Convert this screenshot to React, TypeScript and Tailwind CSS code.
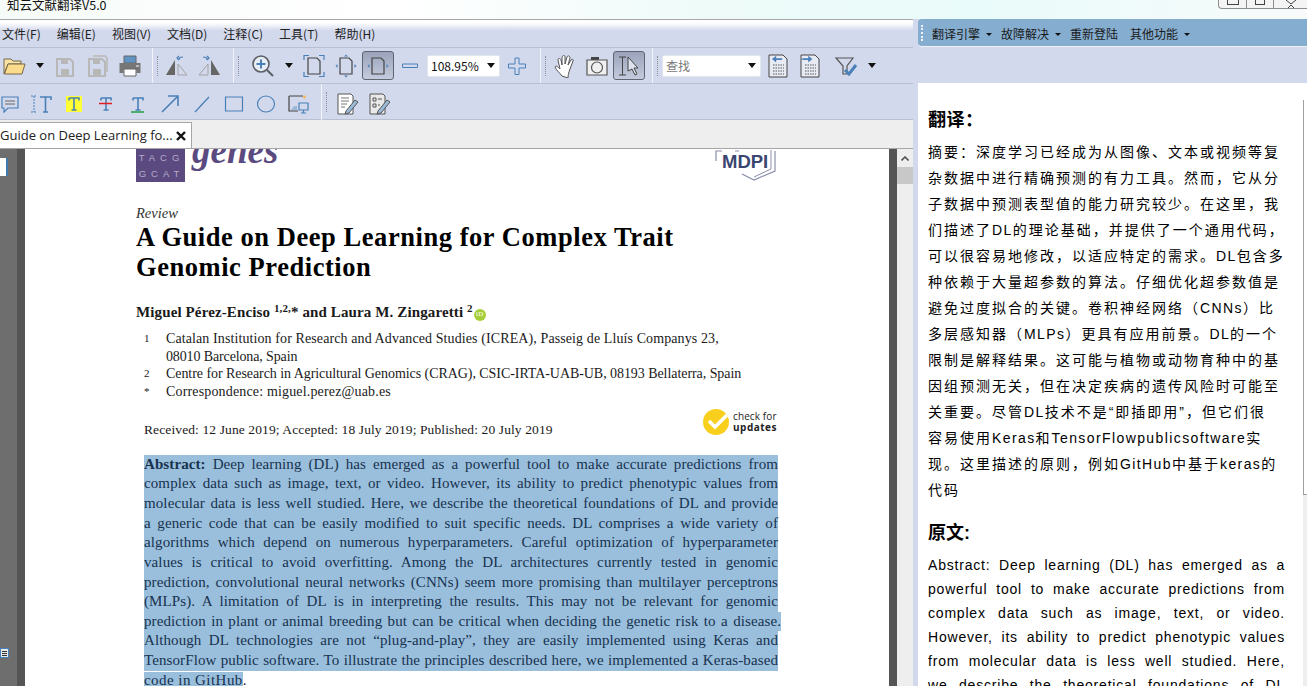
import type { ReactNode } from "react";

const MENUS = ["文件(F)", "编辑(E)", "视图(V)", "文档(D)", "注释(C)", "工具(T)", "帮助(H)"];

const ZH_LINES = [
  "摘要：深度学习已经成为从图像、文本或视频等复",
  "杂数据中进行精确预测的有力工具。然而，它从分",
  "子数据中预测表型值的能力研究较少。在这里，我",
  "们描述了DL的理论基础，并提供了一个通用代码，",
  "可以很容易地修改，以适应特定的需求。DL包含多",
  "种依赖于大量超参数的算法。仔细优化超参数值是",
  "避免过度拟合的关键。卷积神经网络（CNNs）比",
  "多层感知器（MLPs）更具有应用前景。DL的一个",
  "限制是解释结果。这可能与植物或动物育种中的基",
  "因组预测无关，但在决定疾病的遗传风险时可能至",
  "关重要。尽管DL技术不是“即插即用”，但它们很",
  "容易使用Keras和TensorFlowpublicsoftware实",
  "现。这里描述的原则，例如GitHub中基于keras的",
  "代码",
];

const EN_LINES = [
  "Abstract: Deep learning (DL) has emerged as a",
  "powerful tool to make accurate predictions from",
  "complex data such as image, text, or video.",
  "However, its ability to predict phenotypic values",
  "from molecular data is less well studied. Here,",
  "we describe the theoretical foundations of DL",
];

const ABSTRACT = [
  "Deep learning (DL) has emerged as a powerful tool to make accurate predictions from",
  "complex data such as image, text, or video. However, its ability to predict phenotypic values from",
  "molecular data is less well studied. Here, we describe the theoretical foundations of DL and provide",
  "a generic code that can be easily modified to suit specific needs. DL comprises a wide variety of",
  "algorithms which depend on numerous hyperparameters. Careful optimization of hyperparameter",
  "values is critical to avoid overfitting. Among the DL architectures currently tested in genomic",
  "prediction, convolutional neural networks (CNNs) seem more promising than multilayer perceptrons",
  "(MLPs). A limitation of DL is in interpreting the results. This may not be relevant for genomic",
  "prediction in plant or animal breeding but can be critical when deciding the genetic risk to a disease.",
  "Although DL technologies are not “plug-and-play”, they are easily implemented using Keras and",
  "TensorFlow public software. To illustrate the principles described here, we implemented a Keras-based",
];

const AFFILIATIONS = [
  { n: "1", t: "Catalan Institution for Research and Advanced Studies (ICREA), Passeig de Lluís Companys 23,", c: "tracking-[.1px]" },
  { n: "", t: "08010 Barcelona, Spain", c: "-tracking-[.13px]" },
  { n: "2", t: "Centre for Research in Agricultural Genomics (CRAG), CSIC-IRTA-UAB-UB, 08193 Bellaterra, Spain", c: "-tracking-[.06px]" },
  { n: "*", t: "Correspondence: miguel.perez@uab.es", c: "tracking-[.16px]" },
];

const BLUE = "#4a80b8";

const Svg = ({ children, w = 24 }: { children: ReactNode; w?: number }) => (
  <svg width={w} height="24" viewBox={`0 0 ${w} 24`} fill="none">
    {children}
  </svg>
);

const Caret = () => (
  <svg width="8" height="5" viewBox="0 0 8 5">
    <path d="M0 0h8L4 5z" fill="#111" />
  </svg>
);

const Cell = ({ w = 32, active, children }: { w?: number; active?: boolean; children?: ReactNode }) => (
  <div
    style={{ width: w }}
    className={`flex h-[29px] flex-none items-center justify-center rounded-[3px] ${
      active ? "border border-[#5f6672] bg-gradient-to-b from-[#9aa3ba] to-[#c5cbde]" : ""
    }`}
  >
    {children}
  </div>
);

const Divider = () => (
  <div className="mx-[2px] flex h-full flex-none items-center gap-[4px]">
    <div className="h-full w-[1px] bg-[#f2f4fa]" />
    <div className="h-[20px] w-[1px] border-l border-dotted border-[#8a8f9c]" />
  </div>
);

const Combo = ({ w, children }: { w: number; children: ReactNode }) => (
  <div
    style={{ width: w }}
    className="flex h-[22px] flex-none items-center justify-between rounded-[2px] border border-[#e4e6ee] bg-white pl-[3px] pr-[4px]"
  >
    {children}
    <Caret />
  </div>
);

const Folder = () => (
  <Svg>
    <path d="M1 5h7l2 2h8v3H5L1 20z" fill="#f8e3a5" stroke="#75674a" />
    <path d="M1.500 20 5 10h17l-3 10z" fill="#fbdb8c" stroke="#75674a" />
  </Svg>
);
const Floppy = ({ double }: { double?: boolean }) => (
  <Svg>
    {double && <path d="M7 2h12l2 2v13h-2" stroke="#c0c0c0" strokeWidth="2" />}
    <path d="M3 5h13l3 3v14H3z" stroke="#b8b8b8" strokeWidth="2" />
    <path d="M7 6h7v4H7zM7 15h8v6H7z" fill="#b8b8b8" />
  </Svg>
);
const Printer = () => (
  <Svg>
    <path d="M6 2h12v7H6z" fill="#5f93c4" stroke="#666" />
    <path d="M1.500 9h21v10h-4v-3h-13v3h-4z" fill="#767676" />
    <path d="M6 15h12v7H6z" fill="#fff" stroke="#666" />
    <path d="M18 12h3" stroke="#fff" />
  </Svg>
);
const Flip = ({ mirror }: { mirror?: boolean }) => (
  <Svg>
    <g transform={mirror ? "matrix(-1 0 0 1 24 0)" : undefined}>
      <path d="M1 21 10 6v15z" fill="#666" />
      <path d="M13 21V10l9 11z" stroke="#a3a3a3" />
      <path d="M14 6c0-2 1-3 4-3M14 2l-2 2 2 2" stroke={BLUE} strokeWidth="1.200" />
    </g>
  </Svg>
);
const Zoom = () => (
  <Svg>
    <circle cx="10" cy="10" r="8" fill="#e8ecf5" stroke="#5a5f66" strokeWidth="1.600" />
    <path d="M10 5.500v9M5.500 10h9" stroke={BLUE} strokeWidth="2" />
    <path d="m16 16 6 6" stroke="#5a5f66" strokeWidth="2" />
  </Svg>
);
const PageShape = () => <path d="M6 4h9l3 3v13H6z" stroke="#444" strokeWidth="1.200" />;
const FitPage = () => (
  <Svg>
    <PageShape />
    <path d="M2 6V1.500h5M17 1.500h5V6M2 18v4.500h5M17 22.500h5V18" stroke={BLUE} strokeWidth="1.200" />
  </Svg>
);
const FitHeight = () => (
  <Svg>
    <PageShape />
    <path d="M10 2.500 12 .5l2 2zM10 21.500l2 2 2-2zM3.500 10 1.500 12l2 2zM20.500 10l2 2-2 2z" fill={BLUE} />
  </Svg>
);
const FitWidth = () => (
  <Svg>
    <PageShape />
    <path d="M3.500 10 1.500 12l2 2zM20.500 10l2 2-2 2z" fill={BLUE} />
  </Svg>
);
const Minus = () => (
  <Svg>
    <path d="M4.500 10h15v3.500h-15z" stroke={BLUE} />
  </Svg>
);
const Plus = () => (
  <Svg>
    <path d="M10 4h4v6h6.500v4H14v6.500h-4V14H3.500v-4H10z" stroke={BLUE} />
  </Svg>
);
const Hand = () => (
  <Svg>
    <path
      d="M9 22c-2-3-6-6-7-9 1-2 3 0 5 2L5 6c0-2 2-2 3 0l1 5 0-8c1-2 3-2 3 0v7l2-7c1-2 3-1 3 1l-2 7 3-5c1-1 3-1 2 1l-3 8c-1 3-2 5-2 9z"
      fill="#fff"
      stroke="#555"
    />
  </Svg>
);
const Camera = () => (
  <Svg>
    <path d="M6 3h8v3H6z" fill="#444" />
    <path d="M2 6h20v15H2z" fill="#f0f0f0" stroke="#555" strokeWidth="1.200" />
    <circle cx="12" cy="13.500" r="5.500" stroke="#555" strokeWidth="1.200" />
  </Svg>
);
const SelectTool = () => (
  <Svg>
    <path d="M2 3h7M2 21h7M5.500 3v18" stroke="#444" />
    <path d="M11 3v14l4-2 3 6 2-1-3-6h4z" fill="#dde2ef" stroke="#444" />
  </Svg>
);
const NavDoc = ({ flip }: { flip?: boolean }) => (
  <Svg>
    <path d="M3 2h14l4 4v18H3z" fill="#e8ebf4" stroke="#444" transform="translate(0 -1)" />
    <path d="M7 11h11M7 14h11M7 17h11M7 20h11" stroke="#555" strokeDasharray="1.500 1" />
    <path d={flip ? "M5 5h7V2l5 4-5 4V7H5z" : "M19 5h-7V2L7 6l5 4V7h7z"} fill={BLUE} transform="scale(.85)" />
  </Svg>
);
const Funnel = () => (
  <Svg>
    <path d="M2 4h17l-6 8v8H9v-8z" stroke="#555" strokeWidth="1.200" />
    <path d="m11 16 4 4 7-9" stroke={BLUE} strokeWidth="3" />
  </Svg>
);

const Comment = () => (
  <Svg>
    <path d="M4 5h16v11H10l-4 4v-4H4z" stroke={BLUE} strokeWidth="1.200" />
    <path d="M7 9h10M7 12h10" stroke="#666" />
  </Svg>
);
const Ibeam = () => (
  <Svg>
    <path d="M1 4h6M1 20h6M4 4v16" stroke={BLUE} strokeDasharray="2 1" />
    <path d="M10 5h11v3M15.500 5v15M13 20h5" stroke={BLUE} strokeWidth="1.600" />
  </Svg>
);
const Letter = ({ bg, line }: { bg?: string; line?: { y: number; c: string } }) => (
  <Svg w={16}>
    {bg && <path d="M0 4h16v16H0z" fill={bg} />}
    <path d="M3 6h10v2.500M3 8.500V6M8 6v12M5.500 18h5" stroke={BLUE} strokeWidth="1.600" />
    {line && <path d={`M1 ${line.y}h13`} stroke={line.c} strokeWidth="1.500" />}
  </Svg>
);
const Arrow = () => (
  <Svg>
    <path d="M4 20 19 5M10 4h10v10" stroke={BLUE} strokeWidth="1.600" />
  </Svg>
);
const Line = () => (
  <Svg>
    <path d="m5 20 14-15" stroke={BLUE} strokeWidth="1.300" />
  </Svg>
);
const Rect = () => (
  <Svg>
    <path d="M3.500 5h17v14h-17z" stroke={BLUE} strokeWidth="1.200" />
  </Svg>
);
const Ellipse = () => (
  <Svg>
    <ellipse cx="12" cy="12" rx="8.500" ry="8" stroke={BLUE} strokeWidth="1.200" />
  </Svg>
);
const Stamp = () => (
  <Svg>
    <path d="M3 4h14M3 4v15h9" stroke="#444" strokeWidth="1.200" />
    <path d="M13 11h9v7h-9zM15 21h5M17.500 18v3" stroke={BLUE} strokeWidth="1.200" />
    <path d="M5 18l3-4h3v4z" fill="#9bb8d6" />
    <path d="M17 5h3M18.500 3.500v3" stroke="#f0b860" strokeWidth="1.500" />
  </Svg>
);
const Sign = ({ form }: { form?: boolean }) => (
  <Svg>
    <path d="M3 2h13l2 2v18H3z" fill={form ? "#e9e9e9" : "#fff"} stroke="#555" />
    {form ? (
      <path d="M6 6h3v3H6zM6 12h3v3H6zM11 7h4M11 13h2" stroke="#555" />
    ) : (
      <path d="M6 6h8M6 9h8M6 12h6M6 15h4" stroke="#777" />
    )}
    <path d="m11 19 9-11 3 2-9 11-4 1z" fill="#9bbad8" stroke="#555" />
  </Svg>
);

const Toolbars = () => (
  <div className="flex-none bg-[#d3d9ec]">
    <div className="flex h-[37px] items-center border-y border-[#b9c0d2]">
      <Cell w={29}><Folder /></Cell>
      <Cell w={21}><Caret /></Cell>
      <Cell><Floppy /></Cell>
      <Cell><Floppy double /></Cell>
      <Cell><Printer /></Cell>
      <Cell w={4} />
      <Divider />
      <Cell w={1} />
      <Cell><Flip /></Cell>
      <Cell><Flip mirror /></Cell>
      <Cell w={6} />
      <Divider />
      <Cell w={6} />
      <Cell><Zoom /></Cell>
      <Cell w={19}><Caret /></Cell>
      <Cell><FitPage /></Cell>
      <Cell><FitHeight /></Cell>
      <Cell active><FitWidth /></Cell>
      <Cell><Minus /></Cell>
      <Cell w={1} />
      <Combo w={73}><span className="text-[12px] text-[#111]">108.95%</span></Combo>
      <Cell w={1} />
      <Cell><Plus /></Cell>
      <Cell w={5} />
      <Divider />
      <Cell w={1} />
      <Cell><Hand /></Cell>
      <Cell><Camera /></Cell>
      <Cell active><SelectTool /></Cell>
      <Cell w={5} />
      <Divider />
      <Cell w={2} />
      <Combo w={99}><span className="text-[12px] text-[#777]">查找</span></Combo>
      <Cell w={1} />
      <Cell><NavDoc /></Cell>
      <Cell><NavDoc flip /></Cell>
      <Cell w={40}><Funnel /></Cell>
      <Cell w={12}><Caret /></Cell>
    </div>
    <div className="flex h-[36px] items-center border-b border-[#b9c0d2] pt-[4px]">
      <div className="-ml-[6px] flex items-center">
        <Cell><Comment /></Cell>
        <Cell><Ibeam /></Cell>
        <Cell><Letter bg="#ffff33" /></Cell>
        <Cell><Letter line={{ y: 11.500, c: "#e02020" }} /></Cell>
        <Cell><Letter line={{ y: 20, c: "#20a040" }} /></Cell>
        <Cell><Arrow /></Cell>
        <Cell><Line /></Cell>
        <Cell><Rect /></Cell>
        <Cell><Ellipse /></Cell>
        <Cell><Stamp /></Cell>
      </div>
      <div className="-mt-[4px] ml-[5px] flex h-[36px] items-center"><Divider /></div>
      <Cell w={34}><div className="pl-[2px]"><Sign /></div></Cell>
      <Cell><Sign form /></Cell>
    </div>
  </div>
);

const Line1 = ({ children, className = "" }: { children: ReactNode; className?: string }) => (
  <div className={`h-[19.640px] bg-[#9abfdc] leading-[19.640px] text-[#17324f] [text-align-last:justify] ${className}`}>{children}</div>
);

const Page = () => (
  <div className="relative min-w-0 flex-1 overflow-hidden bg-white font-['Liberation_Serif',serif] text-[#1a1a1a]">
    <div className="flex h-[33px] items-end justify-between pl-[111px] pr-[112px]">
      <div className="flex items-end">
        <div className="grid h-[33px] w-[49px] bg-[#5b4a80] pl-[2px] pt-[2px] text-center font-['Liberation_Sans',sans-serif] text-[9.500px] leading-[14px] tracking-[5px] text-[#b6aacb]">
          <span>TACG</span>
          <span>GCAT</span>
        </div>
        <span className="ml-[7px] -translate-y-[13px] text-[37px] leading-[37px] font-bold italic text-[#5b4a80]">genes</span>
      </div>
      <svg width="62" height="33" viewBox="0 0 62 33" fill="none">
        <path d="M1 12V2h6M20 2h4M60 2v20L39 31l-12-6" stroke="#8a8fa8" strokeWidth="1.200" />
        <path d="M56 1v19L39 28" stroke="#8a8fa8" />
        <text x="7" y="19" fontFamily="Liberation Sans" fontSize="18.500" fontWeight="700" fill="#3a4570">MDPI</text>
      </svg>
    </div>
    <div className="pl-[111px] pt-[23px] text-[14.500px] italic leading-[16px] text-[#333]">Review</div>
    <div className="pl-[111px] pt-[2px] text-[26.500px] font-bold leading-[29.500px] tracking-[.55px] text-black">
      <div>A Guide on Deep Learning for Complex Trait</div>
      <div>Genomic Prediction</div>
    </div>
    <div className="pl-[111px] pt-[21px] text-[15px] font-bold leading-[19px] tracking-[.12px]">
      Miguel Pérez-Enciso <sup className="text-[11px]">1,2,</sup>* and Laura M. Zingaretti <sup className="text-[11px]">2</sup>
      <span className="ml-[1px] inline-flex h-[12px] w-[12px] items-center justify-center rounded-full bg-[#a6ce39] align-[1px] text-[7px] font-normal text-white">iD</span>
    </div>
    <div className="pl-[119px] pt-[8px] text-[14px] leading-[17.700px]">
      {AFFILIATIONS.map((a) => (
        <div key={a.t} className="flex">
          <span className="w-[22px] flex-none text-[11px]">{a.n}</span>
          <span className={a.c}>{a.t}</span>
        </div>
      ))}
    </div>
    <div className="flex h-[36px] items-center justify-between pl-[119px] pr-[112px] pt-[10px] text-[13.500px] tracking-[.11px]">
      <span className="pt-[13px]">Received: 12 June 2019; Accepted: 18 July 2019; Published: 20 July 2019</span>
      <div className="mb-[4px] flex items-center gap-[4px] font-['Open_Sans',sans-serif] text-[10px] leading-[11px] text-[#222]">
        <svg width="26" height="26" viewBox="0 0 26 26" fill="none">
          <circle cx="13" cy="13" r="13" fill="#f8cf1d" />
          <path d="m6 12 6 6L24 6" stroke="#fff" strokeWidth="3.500" />
        </svg>
        <div>
          <div>check for</div>
          <div className="font-bold tracking-[.5px]">updates</div>
        </div>
      </div>
    </div>
    <div className="ml-[119px] mr-[111px] mt-[18px] text-[15px] tracking-[.1px]">
      <Line1><b>Abstract:</b> {ABSTRACT[0]}</Line1>
      {ABSTRACT.slice(1).map((l, i) => (
        <Line1 key={l} className={i === 7 ? "-mr-[3px]" : ""}>{l}</Line1>
      ))}
      <div className="h-[19.640px] leading-[19.640px]">
        <span className="bg-[#9abfdc] tracking-[.45px] text-[#17324f]">code in GitHub</span>.
      </div>
    </div>
  </div>
);

const DocArea = () => (
  <div className="flex min-h-0 flex-1">
    <div className="relative w-[17px] flex-none overflow-hidden bg-[#6e6e6e]">
      <div className="absolute left-0 top-[9px] h-[18px] w-[8px] rounded-r-[1px] border-r-2 border-[#3d7ab0] bg-white" />
      <div className="absolute left-0 top-[499px] flex h-[10px] w-[9px] flex-col justify-center gap-[1px] border border-[#4a80b8] bg-[#e8e8e8] px-[1px]">
        <i className="h-[1px] bg-[#333]" />
        <i className="h-[1px] bg-[#333]" />
        <i className="h-[1px] bg-[#333]" />
      </div>
    </div>
    <div className="w-[8px] flex-none bg-[#555]" />
    <Page />
    <div className="w-[8px] flex-none bg-[#555]" />
    <div className="flex w-[16px] flex-none flex-col items-center bg-[#eeeeee]">
      <svg className="mt-[7px]" width="8" height="5" viewBox="0 0 8 5" fill="none">
        <path d="m.5 4.500 3.500-3.500 3.500 3.500" stroke="#555" strokeWidth="1.600" />
      </svg>
      <div className="mt-[6px] h-[17px] w-full bg-[#c8c8c8]" />
    </div>
  </div>
);

const LeftPane = () => (
  <div className="flex w-[913px] flex-none flex-col">
    <div className="flex h-[28px] flex-none items-center gap-[16px] border-t border-[#a6a6a6] bg-gradient-to-b from-[#ffffff] from-10% to-[#d3d9ec] to-40% pl-[2px] pt-[1px] text-[12px] text-[#222]">
      {MENUS.map((m) => (
        <span key={m}>{m}</span>
      ))}
    </div>
    <Toolbars />
    <div className="flex h-[29px] flex-none items-end border-b border-[#a6a6a6] bg-[#eeeeee]">
      <div className="flex h-[27px] w-[192px] -mb-[1px] items-center justify-between border border-l-0 border-[#a6a6a6] bg-white pr-[5px] font-['Open_Sans',sans-serif] text-[13px] text-[#222]">
        <span className="whitespace-nowrap">Guide on Deep Learning fo...</span>
        <svg width="10" height="10" viewBox="0 0 10 10">
          <path d="m1 1 8 8M9 1 1 9" stroke="#111" strokeWidth="2.400" />
        </svg>
      </div>
    </div>
    <DocArea />
  </div>
);

const TopMenu = ({ label, caret = true, className = "" }: { label: string; caret?: boolean; className?: string }) => (
  <div className={`flex items-center gap-[6px] ${className}`}>
    <span>{label}</span>
    {caret && (
      <svg width="6" height="3" viewBox="0 0 6 3">
        <path d="M0 0h6L3 3z" fill="#111" />
      </svg>
    )}
  </div>
);

// latin runs in the translation are set tighter than the CJK
const ZhLine = ({ text }: { text: string }) => (
  <div className="whitespace-nowrap">
    {text.split(/([A-Za-z]+)/).map((part, i) =>
      i % 2 ? (
        <span key={i} className="tracking-[1.400px]">{part}</span>
      ) : (
        <span key={i}>{part}</span>
      ),
    )}
  </div>
);

const RightPane = () => (
  <div className="flex min-w-0 flex-1 flex-col bg-[#d3d9ec] pl-[5px] font-['Liberation_Sans','Noto_Sans_CJK_SC',sans-serif]">
    <div className="flex h-[28px] flex-none items-center gap-[9px] rounded-l-[4px] border-b border-[#eef1f8] bg-[#85adcf] pl-[3px] pt-[4px] text-[12px] text-[#1a1a1a]">
      <div className="-mt-[4px] h-[16px] border-l-2 border-dotted border-[#eef1f8]" />
      <TopMenu label="翻译引擎" />
      <TopMenu label="故障解决" />
      <TopMenu label="重新登陆" caret={false} />
      <TopMenu label="其他功能" className="ml-[3px]" />
    </div>
    <div className="h-[36px] flex-none" />
    <div className="flex min-h-0 flex-1 overflow-hidden bg-white">
      <div className="min-w-0 flex-1 pl-[10px] pt-[25px] text-black">
        <h2 className="text-[18px] font-bold leading-[24px] tracking-[.5px]">翻译：</h2>
        <div className="mt-[7px] text-[14px] leading-[26px] tracking-[2px]">
          {ZH_LINES.map((l) => (
            <ZhLine key={l} text={l} />
          ))}
        </div>
        <h2 className="mt-[18px] text-[18px] font-bold leading-[24px]">原文:</h2>
        <div className="mt-[8px] w-[357px] text-[14px] leading-[24px] tracking-[.8px]">
          {EN_LINES.map((l) => (
            <div key={l} className="[text-align-last:justify]">{l}</div>
          ))}
        </div>
      </div>
      <div className="mt-[17px] flex w-[4px] flex-none flex-col bg-[#eeeeee]">
        <div className="h-[395px] border-b border-l border-[#a0a0a0] bg-white" />
      </div>
    </div>
  </div>
);

const App = () => (
  <div className="flex h-[686px] w-[1307px] flex-col overflow-hidden bg-white font-['Noto_Sans_CJK_SC','Liberation_Sans',sans-serif]">
    <div className="relative flex h-[19px] flex-none items-start justify-between bg-[linear-gradient(90deg,#f6fbf8,#ffffff_30%,#eefbf9_55%,#e9fbfa_75%,#f8fafb)] pl-[7px] text-[12.500px] leading-[9px] text-[#111]">
      <span>知云文献翻译V5.0</span>
      <div className="flex h-[9px] overflow-hidden rounded-bl-[4px] border-b border-l border-[#8e8e8e] bg-[#f4f4f4]">
        <div className="flex w-[28px] justify-center border-r border-[#8e8e8e]"><i className="h-[5px] w-[12px] border-x border-b border-[#444]" /></div>
        <div className="flex w-[27px] justify-center border-r border-[#8e8e8e]"><i className="h-[5px] w-[10px] border-x border-b border-[#444]" /></div>
        <div className="flex w-[33px] justify-center">
          <svg width="12" height="8" viewBox="0 0 12 8"><path d="M1 0l5 4 5-4M3 8l3-3 3 3" stroke="#444" fill="none" /></svg>
        </div>
      </div>
    </div>
    <div className="flex min-h-0 flex-1">
      <LeftPane />
      <RightPane />
    </div>
  </div>
);

export default App;
